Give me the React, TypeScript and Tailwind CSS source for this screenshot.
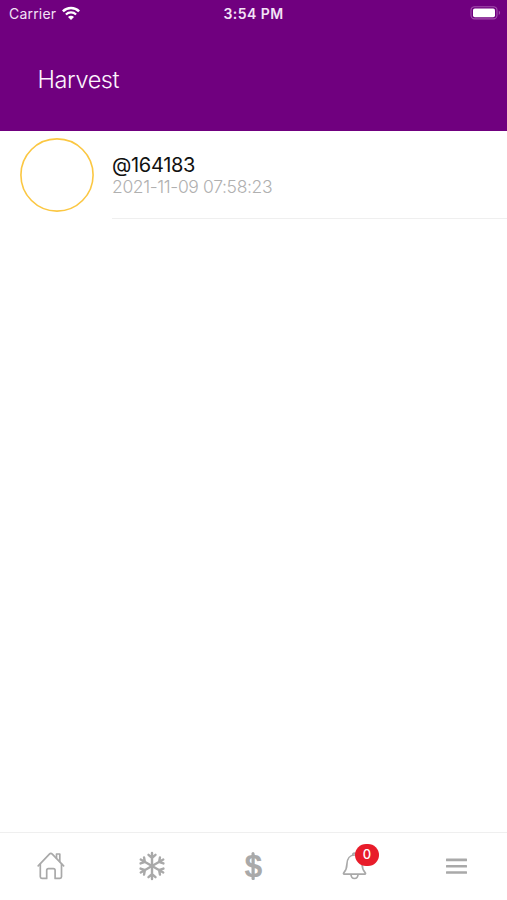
function StatusBar() {
  return (
    <div className="grid h-7 grid-cols-3 items-center text-sm text-[#f3e2f6]">
      <div className="flex items-center gap-1.5 pl-[9px]">
        <span className="text-[14px] tracking-[0.2px]">Carrier</span>
        <svg width="18" height="14" viewBox="0 0 18 14" fill="none" className="-translate-y-px">
          <path d="M.9 5.3a11.4 11.4 0 0 1 16.2 0" stroke="#fff" strokeWidth="2.5" />
          <path d="M3.9 8.5a7.2 7.2 0 0 1 10.2 0" stroke="#fff" strokeWidth="2.2" />
          <path d="M9 14 6 10.9a4.2 4.2 0 0 1 6 0Z" fill="#fff" />
        </svg>
      </div>
      <span className="text-center text-[14px] font-semibold tracking-[0.45px]">3:54 PM</span>
      <div className="flex justify-end pr-[6px]">
        <svg width="31" height="14" viewBox="0 0 31 14" fill="none" className="-translate-y-px">
          <rect x="1" y="0.7" width="26" height="12.2" rx="3.6" stroke="#a34fad" strokeWidth="1.1" />
          <rect x="3" y="2.5" width="22" height="8.8" rx="1.8" fill="#fff" />
          <path d="M28.8 4.8v4.2c1.7-.7 1.7-3.5 0-4.2Z" fill="#a34fad" />
        </svg>
      </div>
    </div>
  );
}

function HarvestRow() {
  return (
    <div className="flex h-[88px] pl-5">
      <svg className="mt-[7px] shrink-0" width="74" height="74" viewBox="0 0 74 74" fill="none">
        <circle cx="37" cy="37" r="36.1" stroke="#fbc742" strokeWidth="1.6" />
      </svg>
      <div className="ml-[18px] flex-1 border-b border-[#efefef] pt-[22px]">
        <div className="text-[20px] leading-[24px] tracking-[-0.3px] text-[#111]">@164183</div>
        <div className="text-[17.5px] leading-[20px] font-light tracking-[-0.36px] text-[#b0b0b0]">2021-11-09 07:58:23</div>
      </div>
    </div>
  );
}

function HomeIcon() {
  return (
    <svg width="28" height="28" viewBox="0 0 28 28" fill="none" stroke="currentColor" strokeWidth="1.7" strokeLinecap="round" strokeLinejoin="round">
      <path d="M1.2 13.8 12.4 2.1c.9-.9 2-.9 2.9 0l11.3 11.7" />
      <path d="M3.3 12v12.8c0 1 .6 1.6 1.6 1.6h4.8v-8c0-1 .7-1.7 1.7-1.7h5c1 0 1.7.7 1.7 1.7v8h4.8c1 0 1.6-.6 1.6-1.6V12" />
      <path d="M19.5 5.9V2h3.3v7.5" />
    </svg>
  );
}

function SnowflakeIcon() {
  return (
    <svg width="28" height="30" viewBox="-14 -15 28 30" fill="none" stroke="currentColor" strokeWidth="2.4" strokeLinecap="round">
      {[0, 60, 120, 180, 240, 300].map((angle) => (
        <path key={angle} d="M0 0V-13M-3.5-11.2 0-8.2 3.5-11.2" transform={`rotate(${angle})`} />
      ))}
    </svg>
  );
}

function BellIcon() {
  return (
    <svg width="26" height="28" viewBox="0 0 26 28" fill="none" stroke="currentColor" strokeWidth="1.7" strokeLinejoin="round">
      <path d="M1.8 22.1c-.5-.3-.4-1 .1-1.5 2.3-2.3 2.9-4.6 3-8.3C5.1 6.5 8.1 3 12.5 3s7.4 3.5 7.6 9.3c.1 3.7.7 6 3 8.3.5.5.6 1.2.1 1.5Z" />
      <path d="M8.9 22.2c.2 2.8 1.5 4.3 3.6 4.3s3.4-1.5 3.6-4.3" />
      <path d="M10.8 3c0-2.4 3.4-2.4 3.4 0" />
    </svg>
  );
}

function TabBar() {
  return (
    <nav className="grid h-[68px] grid-cols-5 border-t border-[#efefef] bg-white text-[#a9a9a9]">
      <div className="flex justify-center pt-[19px]">
        <HomeIcon />
      </div>
      <div className="flex justify-center pt-[18px]">
        <SnowflakeIcon />
      </div>
      <div className="flex justify-center pt-4 font-['Liberation_Sans',sans-serif] text-[32px] leading-[34px] font-bold">
        <div className="relative h-[34px]">
          $
          <span className="absolute top-[3px] left-1/2 h-7 w-[3px] -translate-x-1/2 rounded-full bg-[#a9a9a9]" />
        </div>
      </div>
      <div className="flex justify-center pt-[19px]">
        <div className="relative h-7">
          <BellIcon />
          <span className="absolute -top-2 left-[13px] flex h-[22px] w-6 items-center justify-center rounded-full bg-[#e81c2a] text-[13px] font-medium text-white">
            0
          </span>
        </div>
      </div>
      <div className="flex justify-center pt-[25px]">
        <svg width="21" height="18" viewBox="0 0 21 18" fill="currentColor">
          <rect y="0.6" width="21" height="2.6" rx="0.5" />
          <rect y="6.9" width="21" height="2.6" rx="0.5" />
          <rect y="13.2" width="21" height="2.6" rx="0.5" />
        </svg>
      </div>
    </nav>
  );
}

export default function App() {
  return (
    <div className="flex h-screen flex-col bg-white font-['Inter',sans-serif]">
      <header className="h-[130.5px] shrink-0 bg-[#70007f]">
        <StatusBar />
        <h1 className="pt-[34px] pl-[37.5px] text-[23.5px] leading-9 font-[350] tracking-[-0.4px] text-[#fdf4fd]">Harvest</h1>
      </header>
      <main className="flex-1">
        <HarvestRow />
      </main>
      <TabBar />
    </div>
  );
}
